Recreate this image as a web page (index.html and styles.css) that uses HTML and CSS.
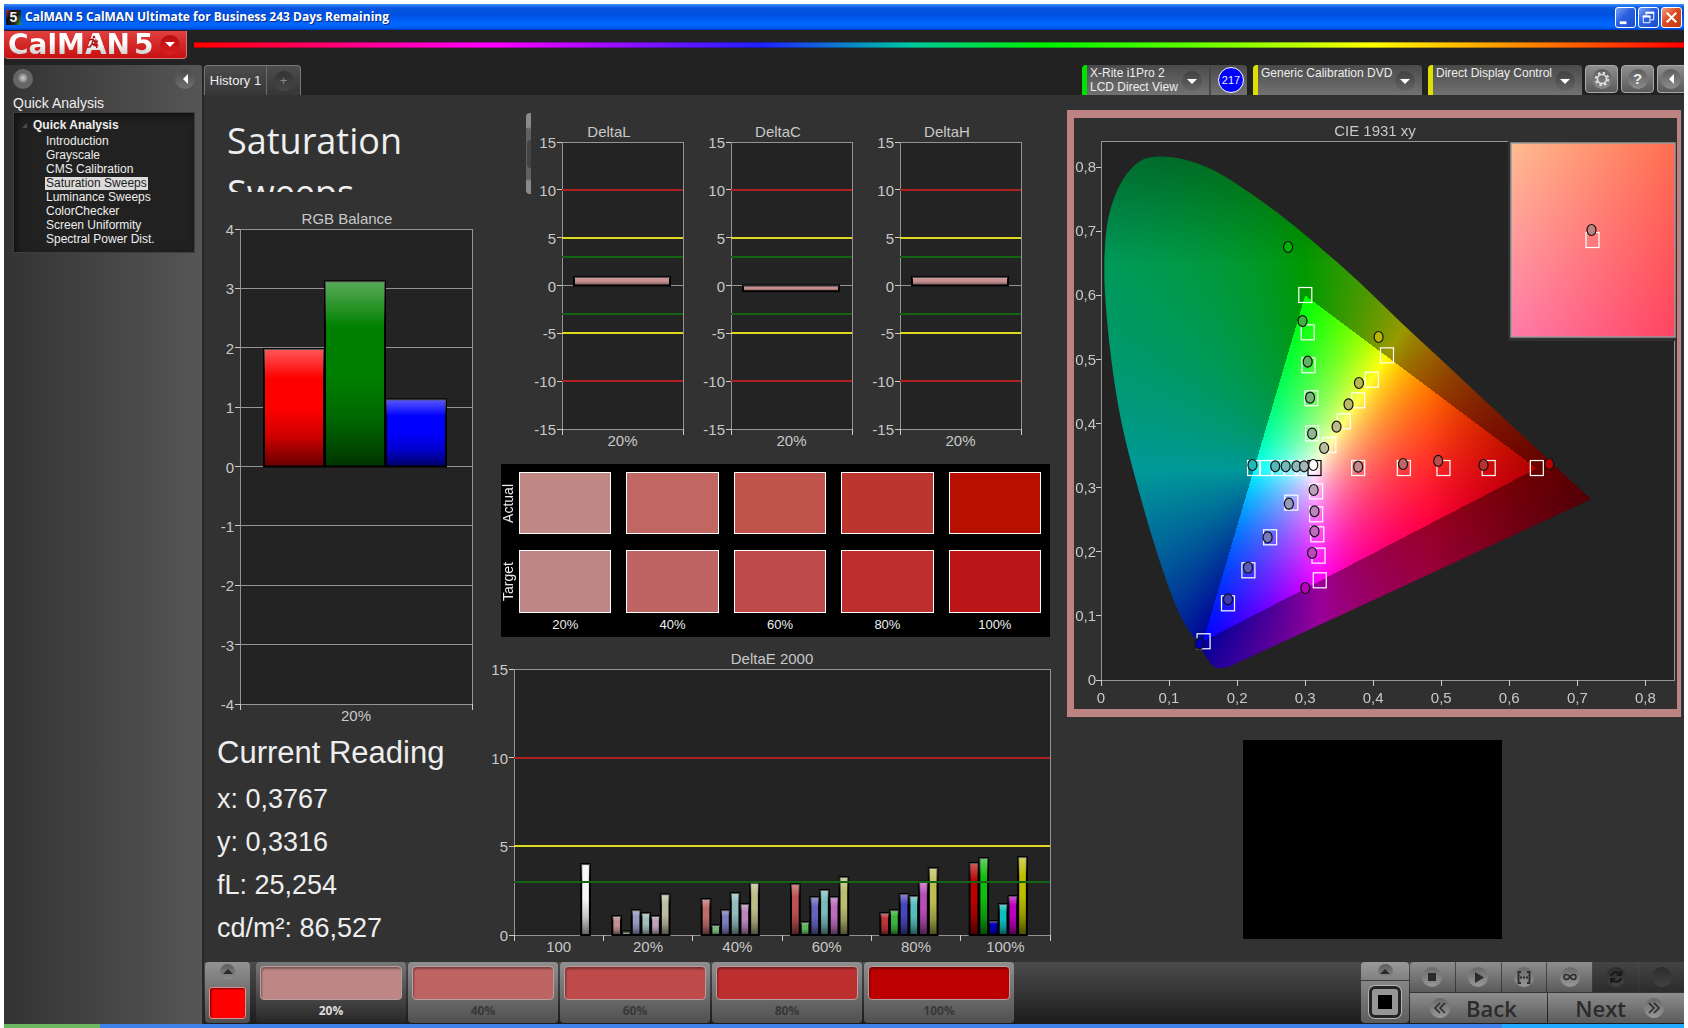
FILE: index.html
```html
<!DOCTYPE html>
<html lang="en">
  <head>
    <meta charset="utf-8">
    <title>CalMAN 5</title>
    <link rel="stylesheet" href="styles.css">
  </head>
  <body>
    <div class="window">
      <header class="titlebar">
        <span class="app-icon">5</span>
        <h1>CalMAN 5 CalMAN Ultimate for Business 243 Days Remaining</h1>
        <div class="window-buttons">
          <button class="win-btn" aria-label="Minimize">
            <svg viewBox="0 0 20 20"><path d="M4 14h7v3H4z" fill="#fff"/></svg>
          </button>
          <button class="win-btn" aria-label="Restore">
            <svg viewBox="0 0 20 20" fill="none" stroke="#fff"><path d="M7.500 8V4.500h8v8H12" /><path d="M7 5h9M4 9h8" stroke-width="2"/><path d="M4.500 8.500h7v7h-7z"/></svg>
          </button>
          <button class="win-btn close" aria-label="Close">
            <svg viewBox="0 0 20 20"><path d="M5 5l10 10M15 5L5 15" stroke="#fff" stroke-width="2.200"/></svg>
          </button>
        </div>
      </header>

      <div class="brand">
        <button class="logo" aria-label="CalMAN 5 menu">
          <span class="logo-name">CalMAN</span>
          <span class="logo-name">5</span>
          <svg class="runner" viewBox="0 0 14 14" fill="none" stroke="#a01818" stroke-width="1.500"><circle cx="8" cy="2" r="1.300" fill="#a01818" stroke="none"/><path d="M3 5l4-1 2 3 3-1M7 5L6 9l4 1 1 3M6 9l-2 3H1"/></svg>
          <span class="round red"><i class="arrow down"></i></span>
        </button>
        <div class="rainbow"></div>
      </div>

      <div class="body">
        <aside class="sidebar">
          <div class="sidebar-top">
            <button class="round knob" aria-label="Pin"></button>
            <button class="round" aria-label="Collapse"><i class="arrow left"></i></button>
          </div>
          <h2>Quick Analysis</h2>
          <nav class="tree">
            <strong>Quick Analysis</strong>
            <ul>
              <li><a href="#">Introduction</a></li>
              <li><a href="#">Grayscale</a></li>
              <li><a href="#">CMS Calibration</a></li>
              <li><a href="#" class="current">Saturation Sweeps</a></li>
              <li><a href="#">Luminance Sweeps</a></li>
              <li><a href="#">ColorChecker</a></li>
              <li><a href="#">Screen Uniformity</a></li>
              <li><a href="#">Spectral Power Dist.</a></li>
            </ul>
          </nav>
        </aside>

        <div class="main">
          <div class="tabs">
            <div class="history">
              <button class="tab">History 1</button>
              <button class="tab add" aria-label="Add history"><span class="round dark">+</span></button>
            </div>
            <button class="device meter">
              <span>X-Rite i1Pro 2<br>LCD Direct View</span>
              <span class="round dark"><i class="arrow down"></i></span>
              <i class="divider"></i>
              <span class="count">217</span>
            </button>
            <button class="device source">
              <span>Generic Calibration DVD</span>
              <span class="round dark"><i class="arrow down"></i></span>
            </button>
            <button class="device display">
              <span>Direct Display Control</span>
              <span class="round dark"><i class="arrow down"></i></span>
            </button>
            <div class="tools">
              <button class="tool" aria-label="Settings"><span class="round">
                <svg width="16" height="16" viewBox="0 0 16 16" fill="none" stroke="#e4e4e4"><circle cx="8" cy="8" r="4.500" stroke-width="1.600"/><circle cx="8" cy="8" r="6.200" stroke-width="2" stroke-dasharray="2.400 2.470"/></svg>
              </span></button>
              <button class="tool" aria-label="Help"><span class="round">?</span></button>
              <button class="tool last" aria-label="Collapse panel"><span class="round"><i class="arrow left"></i></span></button>
            </div>
          </div>

          <main class="workspace">
            <section class="col-left">
              <div class="page-title">Saturation Sweeps</div>
              <svg class="chart" id="rgb-balance" viewBox="0 0 286 525"></svg>
              <div class="reading">
                <h3>Current Reading</h3>
                <p>x: 0,3767</p>
                <p>y: 0,3316</p>
                <p>fL: 25,254</p>
                <p>cd/m²: 86,527</p>
              </div>
            </section>

            <section class="col-mid">
              <div class="deltas">
                <div class="sliver"><i></i></div>
                <svg class="chart" id="delta-l" viewBox="0 0 169 335"></svg>
                <svg class="chart" id="delta-c" viewBox="0 0 169 335"></svg>
                <svg class="chart" id="delta-h" viewBox="0 0 169 335"></svg>
              </div>
              <div class="swatches">
                <span class="side">Actual</span>
                <i class="a20"></i><i class="a40"></i><i class="a60"></i><i class="a80"></i><i class="a100"></i>
                <span class="side">Target</span>
                <i class="t20"></i><i class="t40"></i><i class="t60"></i><i class="t80"></i><i class="t100"></i>
                <b></b><b>20%</b><b>40%</b><b>60%</b><b>80%</b><b>100%</b>
              </div>
              <svg class="chart" id="delta-e" viewBox="0 0 570 315"></svg>
            </section>

            <section class="col-right">
              <div class="cie">
                <canvas id="gamut" width="603" height="591"></canvas>
                <svg class="chart" id="cie-xy" viewBox="0 0 603 591"></svg>
              </div>
              <div class="patch"></div>
            </section>
          </main>

          <footer class="bottombar">
            <button class="pattern" aria-label="Pattern color">
              <span class="round small"><i class="arrow up"></i></span>
              <i class="color"></i>
            </button>
            <div class="levels">
              <button class="level selected"><i class="t20"></i>20%</button>
              <button class="level"><i class="t40"></i>40%</button>
              <button class="level"><i class="t60"></i>60%</button>
              <button class="level"><i class="t80"></i>80%</button>
              <button class="level"><i class="full"></i>100%</button>
            </div>
            <div class="transport">
              <div class="window-size">
                <button class="size-menu" aria-label="Window size menu"><span class="round small"><i class="arrow up"></i></span></button>
                <button class="size-now" aria-label="Window size"><i></i></button>
              </div>
              <div class="keys">
                <button aria-label="Stop"><span class="round"><svg viewBox="0 0 20 20"><path d="M6 6h8v8H6z"/></svg></span></button>
                <button aria-label="Play"><span class="round"><svg viewBox="0 0 20 20"><path d="M7 5l9 5.500L7 16z"/></svg></span></button>
                <button aria-label="Read series"><span class="round"><svg viewBox="0 0 20 20"><path d="M7 5H4.500v11H7M13 5h2.500v11H13" fill="none" stroke="#2b2b2b" stroke-width="1.800"/><path d="M6 9.500h2v2H6zM9 9.500h2v2H9zM12 9.500h2v2h-2z"/></svg></span></button>
                <button aria-label="Read continuous"><span class="round"><svg viewBox="0 0 20 20"><path d="M10 10c-2-3-6-3.500-6 0s4 3 6 0 6-3.500 6 0-4 3-6 0z" fill="none" stroke="#2b2b2b" stroke-width="1.600"/></svg></span></button>
                <button class="off" aria-label="Refresh"><span class="round"><svg viewBox="0 0 20 20"><path d="M5 9c1-4 6-5 9-2M15 11c-1 4-6 5-9 2" fill="none" stroke="#191919" stroke-width="2"/><path d="M16 3v6h-6zM4 17v-6h6z" fill="#191919"/></svg></span></button>
                <button class="off" aria-label="Record"><span class="round"></span></button>
              </div>
              <div class="pager">
                <a href="#" class="back"><span class="round"><svg viewBox="0 0 20 20"><path d="M10 5l-5 5 5 5M15 5l-5 5 5 5" fill="none" stroke="#2b2b2b" stroke-width="1.600"/></svg></span>Back</a>
                <a href="#" class="next">Next<span class="round"><svg viewBox="0 0 20 20"><path d="M10 5l5 5-5 5M5 5l5 5-5 5" fill="none" stroke="#2b2b2b" stroke-width="1.600"/></svg></span></a>
              </div>
            </div>
          </footer>
        </div>
      </div>
      <div class="taskbar"><i></i><i></i><i></i></div>
    </div>
    <script src="script.js"></script>
  </body>
</html>
```
FILE: styles.css
```css
:root {
  --fonts: "Liberation Sans", Arial, sans-serif;
  --ui-fonts: "Open Sans", "Noto Sans", sans-serif;
  --panel: #323232;
  --dark: #222222;
  --text: #eeeeee;
  --chart-text: #c8c8c8;
  --button: linear-gradient(#8e8e8e, #5a5a5a);
}

* {
  box-sizing: border-box;
}

body {
  margin: 0;
  padding: 4px 4px 0;
  background: #ffffff;
  color: var(--text);
  font-family: var(--fonts);
}

h1,
h2,
h3,
p,
ul {
  margin: 0;
  padding: 0;
  font-weight: normal;
}

button {
  border: 0;
  padding: 0;
  color: inherit;
  font-family: inherit;
}

a {
  color: inherit;
  text-decoration: none;
}

.window {
  display: flex;
  flex-direction: column;
  min-height: calc(100vh - 4px);
  background: var(--dark);
}

/* title bar */

.titlebar {
  display: flex;
  align-items: center;
  gap: 4px;
  height: 26px;
  padding: 0 2px;
  background: linear-gradient(#3b93ff, #0855dd 15%, #0050e0 40%, #0066ff 75%, #0060f8 90%, #003cc0);
}

.titlebar h1 {
  flex: 1;
  font: bold 12px/16px var(--ui-fonts);
  color: #ffffff;
  text-shadow: 1px 1px #0a2a80;
}

.app-icon {
  width: 15px;
  height: 15px;
  background: linear-gradient(120deg, #c03020, #101010 30%, #202020 65%, #30a040);
  font: bold 14px/15px var(--fonts);
  text-align: center;
}

.window-buttons {
  display: flex;
  gap: 2px;
}

.win-btn {
  width: 21px;
  height: 21px;
  border: 1px solid #ffffff;
  border-radius: 3px;
  background: linear-gradient(135deg, #7ba2f5, #2a5fe0 45%, #1c4ccc);
}

.win-btn svg {
  display: block;
}

.win-btn.close {
  background: linear-gradient(135deg, #f0a080, #dd4a22 45%, #c03a12);
}

/* brand row */

.brand {
  display: flex;
  gap: 7px;
  height: 35px;
  padding-top: 1px;
}

.logo {
  position: relative;
  display: flex;
  align-items: center;
  gap: 4px;
  width: 183px;
  height: 28px;
  padding: 0 6px 0 4px;
  overflow: hidden;
  border: 1px solid #c77;
  border-width: 0 1px 1px 0;
  border-radius: 0 0 4px 4px;
  background: linear-gradient(#e04040, #c81010);
}

.logo-name {
  font: bold 28px/24px "DejaVu Sans", sans-serif;
  background: linear-gradient(#ffffff 40%, #c4c4c4);
  -webkit-background-clip: text;
  background-clip: text;
  color: transparent;
}

.logo .round {
  margin-left: auto;
}

.runner {
  position: absolute;
  left: 82px;
  top: 4px;
  width: 14px;
}

.rainbow {
  flex: 1;
  height: 6px;
  margin-top: 11px;
  background: linear-gradient(90deg, #ff0000, #ff00ff 20%, #2020ff 38%, #00c8a0 48%, #00f000 57%, #60ff00 67%, #ffff00 79%, #ff8000 90%, #ff0000);
  box-shadow: inset 0 -1px rgba(0, 0, 0, 0.3), inset 0 1px rgba(0, 0, 0, 0.3);
}

/* round icons and arrows */

.round {
  display: flex;
  align-items: center;
  justify-content: center;
  flex: none;
  width: 20px;
  height: 20px;
  border-radius: 50%;
  background: linear-gradient(#5c5c5c, #8c8c8c);
}

.round.dark {
  background: linear-gradient(#404040, #666666);
}

.round.red {
  background: linear-gradient(#b80c10, #d82020);
}

.round.small {
  width: 15px;
  height: 15px;
}

.arrow {
  border: 5px solid transparent;
}

.arrow.down {
  border-top-color: #ffffff;
  border-bottom-width: 0;
}

.arrow.left {
  border-right-color: #ffffff;
  border-left-width: 0;
}

.arrow.up {
  border-bottom-color: #2b2b2b;
  border-top-width: 0;
}

/* sidebar */

.body {
  display: flex;
  flex: 1;
}

.sidebar {
  width: 200px;
  flex: none;
  padding: 4px 7px 0 9px;
  border-right: 2px solid #262626;
  border-top-right-radius: 4px;
  background: linear-gradient(90deg, #333333, #565656);
}

.sidebar-top {
  display: flex;
  justify-content: space-between;
  align-items: center;
}

.sidebar-top .round {
  background: linear-gradient(#4a4a4a, #707070);
}

.sidebar-top .knob {
  background: radial-gradient(circle at 50% 45%, #cccccc, #8a8a8a 4px, #666666 5px);
}

.sidebar h2 {
  margin-top: 6px;
  font-size: 14px;
  line-height: 16px;
}

.tree {
  height: 141px;
  margin-top: 1px;
  padding: 6px 0 0 19px;
  border: 1px solid #3e3e3e;
  background: #212121;
  box-shadow: inset 3px 3px 6px #101010;
  font-size: 12px;
}

.tree strong {
  position: relative;
  display: block;
  line-height: 13px;
}

.tree strong::before {
  content: "";
  position: absolute;
  left: -11px;
  top: 4px;
  border: solid transparent;
  border-width: 0 0 5px 5px;
  border-bottom-color: #4c4c4c;
}

.tree ul {
  margin-top: 2px;
  padding-left: 12px;
  list-style: none;
}

.tree li {
  height: 14px;
  line-height: 14px;
}

.tree a {
  display: inline-block;
  padding: 0 1px;
  line-height: 13px;
}

.tree .current {
  background: #dcdcdc;
  color: #222222;
}

/* tabs */

.main {
  display: flex;
  flex-direction: column;
  flex: 1;
  min-width: 0;
}

.tabs {
  display: flex;
  gap: 6px;
  height: 30px;
  overflow: hidden;
}

.history {
  display: flex;
  margin-right: auto;
  border: 1px solid #777777;
  border-bottom: 0;
  border-radius: 4px 4px 0 0;
  background: linear-gradient(#4c4c4c, #363636);
}

.tab {
  width: 62px;
  background: none;
  border-right: 1px solid #6a6a6a;
  font-size: 13px;
}

.tab.add {
  display: flex;
  align-items: center;
  justify-content: center;
  width: 33px;
  border-right: 0;
  color: #888888;
}

.tab.add .round {
  background: linear-gradient(#333333, #464646);
}

.device {
  display: flex;
  align-items: flex-start;
  padding: 1px 7px 0 3px;
  border-left: 5px solid #e0e000;
  border-radius: 4px 4px 0 0;
  background: linear-gradient(#4a4a4a, #727272);
  font-size: 12px;
  line-height: 14px;
  text-align: left;
  white-space: nowrap;
}

.device > .round {
  margin: 5px 0 0 auto;
}

.device.meter {
  width: 165px;
  padding-right: 3px;
  border-color: #00e000;
}

.device.source {
  width: 169px;
}

.device.display {
  width: 154px;
}

.device .divider {
  width: 2px;
  height: 28px;
  margin: 1px 7px 0;
  background: #484848;
}

.device .count {
  width: 26px;
  height: 26px;
  margin-top: 1px;
  border: 1px solid #ffffff;
  border-radius: 50%;
  background: #0000ff;
  font-size: 11px;
  line-height: 24px;
  text-align: center;
}

.tools {
  display: flex;
  gap: 3px;
  margin-left: -3px;
}

.tool {
  display: flex;
  align-items: center;
  justify-content: center;
  width: 33px;
  height: 28px;
  border: 1px solid #a8a8a8;
  border-radius: 4px;
  background: var(--button);
  font: bold 15px/20px var(--fonts);
}

.tool.last {
  width: 27px;
  border-right: 0;
  border-radius: 4px 0 0 4px;
}

/* workspace */

.workspace {
  display: grid;
  grid-template-columns: 286fr 570fr 624fr;
  flex: 1;
  align-items: start;
  background: var(--panel);
}

.chart {
  display: block;
  width: 100%;
  fill: var(--chart-text);
  font-size: 15px;
}

.page-title {
  height: 97px;
  margin-bottom: 13px;
  padding: 20px 60px 0 23px;
  overflow: hidden;
  font: 36px/52px var(--ui-fonts);
}

.reading {
  padding: 2px 0 0 13px;
}

.reading h3 {
  margin-bottom: 4px;
  font-size: 31px;
  line-height: 42px;
}

.reading p {
  font-size: 27px;
  line-height: 43px;
}

.deltas {
  display: flex;
  align-items: flex-start;
  padding: 24px 22px 0 36px;
}

.deltas .chart {
  flex: 1;
  min-width: 0;
}

.sliver {
  display: flex;
  align-items: center;
  justify-content: flex-end;
  flex: none;
  width: 5px;
  height: 81px;
  margin-top: -6px;
  border-radius: 4px 0 0 4px;
  background: linear-gradient(#8a8a8a 14px, #606060 16px, #606060 66px, #8a8a8a 68px);
}

.sliver i {
  width: 4px;
  height: 28px;
  border-radius: 4px 0 0 4px;
  background: #444444;
}

.swatches {
  display: grid;
  grid-template-columns: 16px repeat(5, 1fr);
  grid-template-rows: 62px 63px 24px;
  gap: 16px 15px;
  height: 173px;
  margin: 10px 10px 7px 11px;
  padding: 8px 9px 0 0;
  background: #000000;
}

.swatches {
  grid-template-columns: 3px repeat(5, 1fr);
}

.swatches .side {
  align-self: center;
  margin-right: -11px;
  writing-mode: vertical-rl;
  transform: rotate(180deg);
  font-size: 14px;
  line-height: 14px;
}

.swatches i {
  border: 1px solid #ffffff;
}

.swatches b {
  margin-top: -12px;
  font-size: 13px;
  font-weight: normal;
  line-height: 15px;
  text-align: center;
}

.a20 { background: #c18986; }
.a40 { background: #c06762; }
.a60 { background: #c0534b; }
.a80 { background: #bd352f; }
.a100 { background: #b70f00; }
.t20 { background: #bf8686; }
.t40 { background: #be6463; }
.t60 { background: #be4a4a; }
.t80 { background: #bd2f2f; }
.t100 { background: #bc1517; }
.full { background: #bc0000; }

.cie {
  display: grid;
  margin: 15px 3px 0 7px;
  border: solid #bd8383;
  border-width: 8px 4px 8px 7px;
  background: #303030;
}

.cie > * {
  grid-area: 1 / 1;
  width: 100%;
}

.patch {
  width: 259px;
  height: 199px;
  margin: 23px 0 0 183px;
  background: #000000;
}

/* bottom bar */

.bottombar {
  display: flex;
  height: 62px;
  padding: 0 0 1px 1px;
  background: linear-gradient(#4c4c4c, #1c1c1c);
}

.pattern {
  display: flex;
  flex-direction: column;
  align-items: center;
  gap: 8px;
  width: 45px;
  padding-top: 2px;
  border-radius: 4px;
  background: linear-gradient(#929292, #4e4e4e);
}

.pattern .color {
  width: 37px;
  height: 32px;
  border: 1px solid #d89090;
  border-radius: 3px;
  background: #ff0000;
  box-shadow: inset 1px 1px 2px #700000;
}

.levels {
  display: flex;
  gap: 2px;
  margin-left: 6px;
}

.level {
  display: flex;
  flex-direction: column;
  gap: 3px;
  width: 150px;
  padding: 4px;
  border-radius: 4px;
  background: linear-gradient(#909090, #505050);
  color: #383838;
  font: bold 12px/16px var(--ui-fonts);
}

.level.selected {
  background: linear-gradient(#787878, #262626);
  color: #dddddd;
}

.level i {
  width: 100%;
  height: 38px;
  border: 1px solid #b8a0a0;
  border-radius: 4px;
  box-shadow: inset 1px 2px 2px rgba(0, 0, 0, 0.35);
}

.transport {
  display: grid;
  grid-template-columns: 48px 274px;
  grid-template-rows: 30px 30px;
  gap: 1px;
  margin-left: auto;
}

.window-size {
  display: flex;
  flex-direction: column;
  grid-row: 1 / 3;
  gap: 1px;
}

.window-size button {
  display: flex;
  align-items: center;
  justify-content: center;
  border-radius: 4px 4px 0 0;
  background: linear-gradient(#9a9a9a, #808080);
}

.size-menu {
  height: 18px;
}

.window-size .size-now {
  flex: 1;
  border-radius: 0 0 4px 4px;
  background: linear-gradient(#868686, #5c5c5c);
}

.size-now i {
  width: 26px;
  height: 26px;
  border: 6px solid #969696;
  border-radius: 3px;
  background: #000000;
  box-shadow: 0 0 0 3px #242424, 0 0 0 4px #b4b4b4;
}

.keys {
  display: grid;
  grid-template-columns: repeat(6, 1fr);
  gap: 1px;
}

.keys button,
.pager a {
  display: flex;
  align-items: center;
  justify-content: center;
  background: var(--button);
}

.keys button:first-child {
  border-radius: 4px 0 0 0;
}

.keys .round,
.pager .round {
  background: linear-gradient(#686868, #989898);
  fill: #2b2b2b;
}

.keys .off {
  background: linear-gradient(#444444, #2c2c2c);
}

.keys .off .round {
  background: linear-gradient(#2c2c2c, #424242);
}

.keys svg,
.pager svg {
  width: 20px;
  height: 20px;
}

.pager {
  display: grid;
  grid-template-columns: 1fr 1fr;
  gap: 1px;
}

.pager a {
  color: #2b2b2b;
  font: 600 22px/28px var(--ui-fonts);
}

.pager .back {
  gap: 16px;
  justify-content: flex-start;
  padding-left: 20px;
}

.pager .next {
  gap: 18px;
  justify-content: flex-end;
  padding-right: 20px;
}

.taskbar {
  display: flex;
  height: 4px;
  background: #2a6fe0;
}

.taskbar i:nth-child(1) {
  width: 96px;
  background: #6ab860;
}

.taskbar i:nth-child(2) {
  flex: 1;
  background: #3f82ea;
}

.taskbar i:nth-child(3) {
  width: 182px;
  background: #1fa9ff;
}
```
FILE: script.js
```js
const NS = "http://www.w3.org/2000/svg";
const GRID = "#949494";
const RED = "#b02020";
const YELLOW = "#e0d820";
const GREEN = "#146414";

function add(parent, name, attrs, text) {
  const el = document.createElementNS(NS, name);
  Object.keys(attrs).forEach((key) => el.setAttribute(key, attrs[key]));
  if (text !== undefined) el.textContent = text;
  parent.appendChild(el);
  return el;
}

function line(svg, x1, y1, x2, y2, stroke, width = 1) {
  add(svg, "line", { x1, y1, x2, y2, stroke, "stroke-width": width, "shape-rendering": "crispEdges" });
}

function label(svg, x, y, text, anchor = "middle") {
  add(svg, "text", { x, y, "text-anchor": anchor }, text);
}

function barChart(id, o) {
  const svg = document.getElementById(id);
  const { x, y, w, h } = o.plot;
  const toY = (v) => y + ((o.max - v) / (o.max - o.min)) * h;

  // light at the top, dark at the foot of every bar
  const defs = add(svg, "defs", {});
  const shade = add(defs, "linearGradient", { id: id + "-shade", x2: 0, y2: 1 });
  [["#fff", 0.35, 0], ["#fff", 0, 0.25], ["#000", 0, 0.5], ["#000", 0.2, 0.75], ["#000", 0.6, 1]].forEach(
    ([color, opacity, offset]) => add(shade, "stop", { offset, "stop-color": color, "stop-opacity": opacity })
  );

  add(svg, "rect", { x, y, width: w, height: h, fill: "#232323" });
  o.grid.forEach((v) => line(svg, x, toY(v), x + w, toY(v), GRID));
  add(svg, "rect", { x, y, width: w, height: h, fill: "none", stroke: GRID, "shape-rendering": "crispEdges" });

  const groupWidth = w / o.groups.length;
  o.groups.forEach((group, g) => {
    group.bars.forEach(([value, fill], i) => {
      if (!value) return;
      const top = toY(Math.max(value, 0));
      const box = {
        x: x + g * groupWidth + o.pad + i * o.slot,
        y: top,
        width: o.slot - 1,
        height: toY(Math.min(value, 0)) - top,
      };
      add(svg, "rect", { ...box, fill, stroke: "#000", "stroke-width": 2 });
      add(svg, "rect", { ...box, fill: `url(#${id}-shade)` });
    });
    label(svg, x + (g + 0.5) * groupWidth, y + h + 17, group.name);
    line(svg, x + g * groupWidth, y + h, x + g * groupWidth, y + h + 6, "#ccc");
  });
  line(svg, x + w, y + h, x + w, y + h + 6, "#ccc");

  (o.limits || []).forEach(([v, color]) => line(svg, x, toY(v), x + w, toY(v), color, 2));
  o.ticks.forEach((v) => {
    label(svg, x - 6, toY(v) + 6, v, "end");
    line(svg, x - 5, toY(v), x, toY(v), "#ccc");
  });
  label(svg, o.titleX, y - 5, o.title);
}

barChart("rgb-balance", {
  title: "RGB Balance",
  titleX: 143,
  plot: { x: 36, y: 24, w: 232, h: 475 },
  min: -4,
  max: 4,
  grid: [3, 2, 1, 0, -1, -2, -3],
  ticks: [4, 3, 2, 1, 0, -1, -2, -3, -4],
  pad: 24,
  slot: 61,
  groups: [{ name: "20%", bars: [[1.98, "#ff0000"], [3.12, "#008000"], [1.13, "#0000ff"]] }],
});

[["delta-l", "DeltaL", 0.9], ["delta-c", "DeltaC", -0.6], ["delta-h", "DeltaH", 0.9]].forEach(([id, title, value]) =>
  barChart(id, {
    title,
    titleX: 78,
    plot: { x: 31, y: 23, w: 121, h: 287 },
    min: -15,
    max: 15,
    grid: [0],
    ticks: [15, 10, 5, 0, -5, -10, -15],
    limits: [[10, RED], [5, YELLOW], [3, GREEN], [-3, GREEN], [-5, YELLOW], [-10, RED]],
    pad: 12,
    slot: 97,
    groups: [{ name: "20%", bars: [[value, "#c89090"]] }],
  })
);

const sweep = (name, values, colors) => ({ name, bars: values.map((v, i) => [v, colors[i]]) });

barChart("delta-e", {
  title: "DeltaE 2000",
  titleX: 282,
  plot: { x: 24, y: 25, w: 536, h: 266 },
  min: 0,
  max: 15,
  grid: [],
  ticks: [15, 10, 5, 0],
  limits: [[10, RED], [5, YELLOW], [3, GREEN]],
  pad: 9,
  slot: 9.7,
  groups: [
    sweep("100", [0, 0, 0, 0, 0, 0, 4], ["", "", "", "", "", "", "#f4f4f4"]),
    sweep("20%", [1.07, 0.2, 1.4, 1.24, 1.07, 2.3], ["#c09090", "#90b790", "#9898c0", "#a0bcbc", "#bca0bc", "#bcbca0"]),
    sweep("40%", [2.03, 0.56, 1.4, 2.37, 1.75, 2.93], ["#be6c6c", "#78b478", "#7c7cbe", "#90bcbc", "#bc86bc", "#bcbc88"]),
    sweep("60%", [2.87, 0.73, 2.14, 2.54, 2.14, 3.27], ["#be5050", "#5cb45c", "#6464be", "#78bcbc", "#bc6cbc", "#bcbc70"]),
    sweep("80%", [1.24, 1.4, 2.31, 2.2, 3, 3.78], ["#bc3434", "#3cb43c", "#4646be", "#54bcbc", "#bc4cbc", "#bcbc50"]),
    sweep("100%", [4.06, 4.34, 0.79, 1.75, 2.2, 4.4], ["#bc0000", "#10bc10", "#0000bc", "#10bcbc", "#bc00bc", "#bcbc00"]),
  ],
});

/* CIE 1931 chart */

const cie = { x: 27, y: 23, w: 573, h: 539 };
const toPx = (x, y) => [cie.x + x * 680.5, cie.y + cie.h - y * 641];

const locus = [
  [0.166, 0.019], [0.157, 0.032], [0.142, 0.058], [0.115, 0.099], [0.085, 0.187], [0.058, 0.284], [0.029, 0.4],
  [0.014, 0.504], [0.006, 0.593], [0.004, 0.655], [0.009, 0.722], [0.027, 0.775], [0.05, 0.806], [0.069, 0.816],
  [0.104, 0.817], [0.139, 0.808], [0.175, 0.791], [0.222, 0.758], [0.269, 0.722], [0.321, 0.676], [0.38, 0.621],
  [0.439, 0.559], [0.498, 0.502], [0.557, 0.443], [0.61, 0.391], [0.669, 0.332], [0.72, 0.282], [0.192, 0.022],
  [0.18, 0.018],
];

function chromaColor(x, y) {
  const X = x / y;
  const Z = (1 - x - y) / y;
  const rgb = [
    3.2406 * X - 1.5372 - 0.4986 * Z,
    -0.9689 * X + 1.8758 + 0.0415 * Z,
    0.0557 * X - 0.204 + 1.057 * Z,
  ];
  // out of gamut: pull back towards white until it fits
  const low = Math.min(...rgb, 0);
  const peak = Math.max(...rgb) - low;
  let level = low < 0 ? 0.6 : 1;
  if (x > 0.48) level *= 1 - (x - 0.48) * 2;
  if (y > 0.65) level *= 1 - (y - 0.65) * 1.8;
  return rgb.map((c) => (255 * level * (c - low)) / peak);
}

function drawGamut() {
  const canvas = document.getElementById("gamut");
  const ctx = canvas.getContext("2d");
  const fill = document.createElement("canvas");
  fill.width = canvas.width;
  fill.height = canvas.height;
  const fillCtx = fill.getContext("2d");
  const image = fillCtx.createImageData(fill.width, fill.height);
  for (let py = cie.y; py < cie.y + cie.h; py++) {
    for (let px = cie.x; px < cie.x + 500; px++) {
      const color = chromaColor((px - cie.x + 0.5) / 680.5, (cie.y + cie.h - py - 0.5) / 641);
      image.data.set([...color, 255], (py * fill.width + px) * 4);
    }
  }
  fillCtx.putImageData(image, 0, 0);

  ctx.fillStyle = "#232323";
  ctx.fillRect(cie.x, cie.y, cie.w, cie.h);
  // midpoint curves keep the outline smooth
  ctx.beginPath();
  const points = locus.map(([x, y]) => toPx(x, y));
  const mid = (a, b) => [(a[0] + b[0]) / 2, (a[1] + b[1]) / 2];
  ctx.moveTo(...mid(points[0], points[1]));
  for (let i = 1; i <= points.length; i++) {
    const p = points[i % points.length];
    const next = points[(i + 1) % points.length];
    if (i === 26) ctx.lineTo(...p);
    else ctx.quadraticCurveTo(...p, ...mid(p, next));
  }
  ctx.closePath();
  ctx.clip();
  ctx.drawImage(fill, 0, 0);
}

const targets = [
  [0.2995, 0.6006], [0.303, 0.5424], [0.3042, 0.491], [0.3083, 0.4395], [0.3095, 0.3848],
  [0.4195, 0.5065], [0.3972, 0.4685], [0.3772, 0.4363], [0.356, 0.4035], [0.3348, 0.3666],
  [0.3772, 0.3307], [0.4443, 0.3307], [0.5025, 0.3307], [0.569, 0.3307], [0.6397, 0.3307],
  [0.2242, 0.3307], [0.2418, 0.3307], [0.26, 0.3307], [0.2777, 0.3307], [0.2948, 0.3307],
  [0.2789, 0.2767], [0.2478, 0.2226], [0.2159, 0.1711], [0.1859, 0.1196], [0.15, 0.0604],
  [0.3154, 0.2943], [0.3154, 0.2585], [0.3171, 0.2273], [0.3189, 0.194], [0.3207, 0.1555],
];

const readings = [
  [0.2742, 0.6755, "#00b400"], [0.2954, 0.56, "#3cb43c"], [0.303, 0.4966, "#5cb45c"], [0.3065, 0.4405, "#78b478"],
  [0.3095, 0.3845, "#90b790"], [0.4072, 0.5351, "#b8b400"], [0.3783, 0.4633, "#b8b848"], [0.363, 0.43, "#b8b868"],
  [0.3454, 0.3952, "#bcbc88"], [0.3272, 0.3619, "#bcbca0"], [0.3772, 0.3328, "#c08a8a"], [0.4431, 0.337, "#be6464"],
  [0.4948, 0.3417, "#be4a4a"], [0.5614, 0.3354, "#bc3030"], [0.6579, 0.337, "#b80000"], [0.2218, 0.3354, "#20b8b8"],
  [0.2553, 0.3333, "#54b8b8"], [0.2707, 0.3333, "#74b8b8"], [0.2865, 0.3333, "#8cb8b8"], [0.2977, 0.3333, "#a0b8b8"],
  [0.2754, 0.2751, "#9898bc"], [0.2441, 0.2226, "#7878bc"], [0.2153, 0.1753, "#5c5cbc"], [0.1859, 0.1259, "#3c3cb8"],
  [0.1436, 0.0567, "#0000b0"], [0.3118, 0.2964, "#bca0bc"], [0.313, 0.2631, "#bc84bc"], [0.313, 0.232, "#bc6cbc"],
  [0.3095, 0.1981, "#bc48bc"], [0.2995, 0.1435, "#b800b8"],
];

function square(svg, cx, cy, stroke) {
  add(svg, "rect", { x: cx - 6, y: cy - 7.5, width: 13, height: 15, fill: "none", stroke, "stroke-width": 1.2 });
}

function dot(svg, cx, cy, fill) {
  add(svg, "ellipse", { cx: cx + 0.5, cy, rx: 4.5, ry: 5.5, fill, stroke: "#111", "stroke-width": 1.2 });
}

function drawCie() {
  const svg = document.getElementById("cie-xy");
  const { x, y, w, h } = cie;
  add(svg, "rect", { x, y, width: w, height: h, fill: "none", stroke: GRID, "shape-rendering": "crispEdges" });
  label(svg, 301, 18, "CIE 1931 xy");
  for (let i = 0; i <= 8; i++) {
    const text = i ? "0," + i : "0";
    const [px, py] = toPx(i / 10, i / 10);
    label(svg, px, y + h + 23, text);
    label(svg, x - 5, py + 5, text, "end");
    line(svg, px, y + h, px, y + h + 6, "#ccc");
    line(svg, x - 5, py, x, py, "#ccc");
  }
  targets.forEach(([tx, ty]) => square(svg, ...toPx(tx, ty), "#fff"));
  square(svg, ...toPx(0.313, 0.3307), "#000");
  readings.forEach(([rx, ry, fill]) => dot(svg, ...toPx(rx, ry), fill));
  dot(svg, ...toPx(0.3112, 0.3354), "#fff");

  // close-up of the current reading
  const defs = add(svg, "defs", {});
  const across = add(defs, "linearGradient", { id: "zoom-across" });
  add(across, "stop", { offset: 0, "stop-color": "#ffbc90" });
  add(across, "stop", { offset: 1, "stop-color": "#ff6e50" });
  const base = add(defs, "linearGradient", { id: "zoom-base" });
  add(base, "stop", { offset: 0, "stop-color": "#ff7caa" });
  add(base, "stop", { offset: 1, "stop-color": "#ff4460" });
  const fade = add(defs, "linearGradient", { id: "zoom-fade", x2: 0, y2: 1 });
  add(fade, "stop", { offset: 0, "stop-color": "#fff" });
  add(fade, "stop", { offset: 1, "stop-color": "#000" });
  const mask = add(defs, "mask", { id: "zoom-mask" });
  const box = { x: 437, y: 25, width: 164, height: 194 };
  add(mask, "rect", { ...box, fill: "url(#zoom-fade)" });
  add(svg, "rect", { x: 434, y: 21, width: 169, height: 202, fill: "#303030" });
  add(svg, "rect", { ...box, fill: "url(#zoom-base)" });
  add(svg, "rect", { ...box, fill: "url(#zoom-across)", mask: "url(#zoom-mask)" });
  add(svg, "rect", { ...box, fill: "none", stroke: "#999", "stroke-width": 1.5 });
  square(svg, 518, 122, "#fff");
  dot(svg, 517, 112, "#bd8383");
}

drawGamut();
drawCie();
```
